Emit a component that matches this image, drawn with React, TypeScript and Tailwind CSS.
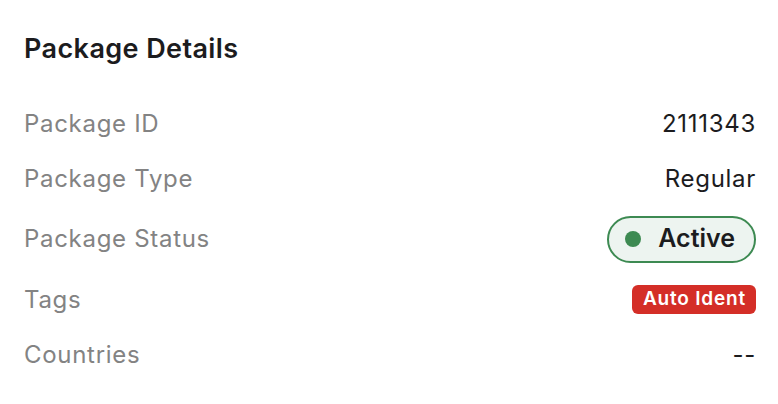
export default function App() {
  const valueCls = "text-[24px] tracking-[0.7px] text-[#1c1c1e]";
  const rows = [
    { label: "Package ID", value: <span className={valueCls}>2111343</span>, h: "h-[55px]" },
    { label: "Package Type", value: <span className={valueCls}>Regular</span>, h: "h-[55px]" },
    {
      label: "Package Status",
      value: (
        <span className="flex h-[47px] items-center gap-[17px] rounded-full border-2 border-[#3d8a52] bg-[#edf4f0] pl-[16px] pr-[19px]">
          <span className="h-[16px] w-[16px] rounded-full bg-[#3d8a52]" />
          <span className="text-[25px] font-semibold tracking-[0px] text-[#1c1c1e]">Active</span>
        </span>
      ),
      h: "h-[66px]",
    },
    {
      label: "Tags",
      value: (
        <span className="flex h-[29px] items-center rounded-[6px] bg-[#d42e27] pl-[11px] pr-[10px] text-[19px] font-semibold tracking-[0.8px] text-white">
          Auto Ident
        </span>
      ),
      h: "h-[55px]",
    },
    { label: "Countries", value: <span className={valueCls}>--</span>, h: "h-[56px]" },
  ];

  return (
    <div className="min-h-screen bg-white pl-[24px] pr-[22px] pt-[30px]" style={{ fontFamily: "Inter, 'Noto Sans', sans-serif" }}>
      <h2 className="text-[27px] font-semibold leading-[38px] tracking-[0.4px] text-[#1c1c1e]">Package Details</h2>
      <div className="mt-[28px] flex flex-col">
        {rows.map((r) => (
          <div key={r.label} className={`flex items-center justify-between ${r.h}`}>
            <span className="text-[24px] tracking-[0.7px] text-[#838383]">{r.label}</span>
            {r.value}
          </div>
        ))}
      </div>
    </div>
  );
}
